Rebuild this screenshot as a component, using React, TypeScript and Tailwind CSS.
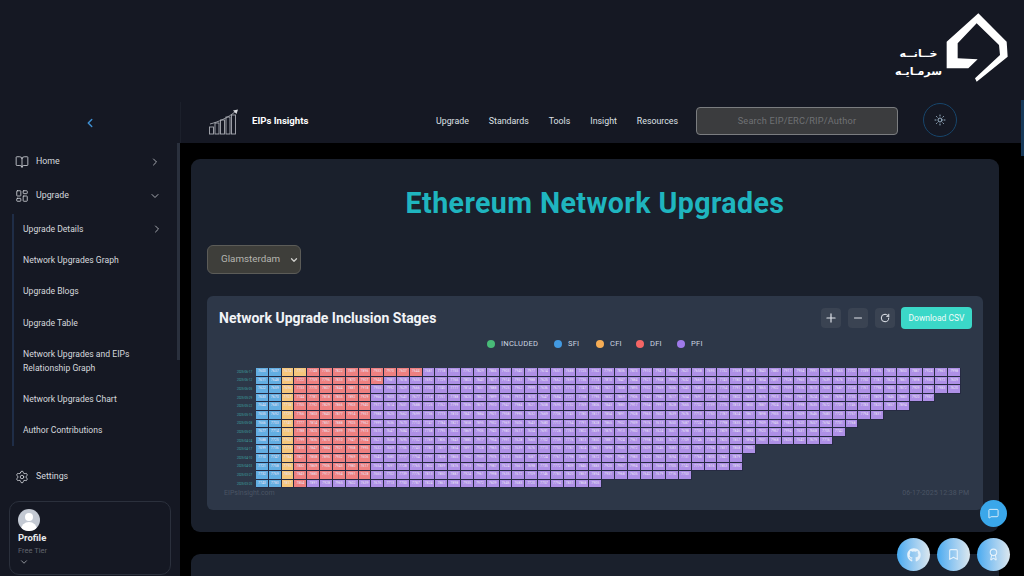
import { FaGithub } from "react-icons/fa"
import {
  Award,
  Bookmark,
  BookOpen,
  ChevronDown,
  ChevronLeft,
  ChevronRight,
  LayoutDashboard,
  MessageSquare,
  Minus,
  Plus,
  RotateCw,
  Settings,
  Sun,
} from "lucide-react"

const rowLengths = [55, 55, 55, 53, 51, 49, 47, 46, 45, 39, 38, 38, 34, 27]
const redEnds = [13, 10, 9, 9, 9, 9, 9, 9, 9, 9, 9, 9, 9, 4]
const rowLabels = [
  "2025-06-17", "2025-06-12", "2025-06-05", "2025-05-29", "2025-05-22", "2025-05-15", "2025-05-08",
  "2025-05-01", "2025-04-24", "2025-04-17", "2025-04-10", "2025-04-03", "2025-03-27", "2025-03-20",
]

const subItems = [
  { label: "Upgrade Details", h: "h-[30px]", arrow: true },
  { label: "Network Upgrades Graph", h: "h-[31px]" },
  { label: "Upgrade Blogs", h: "h-[32px]" },
  { label: "Upgrade Table", h: "h-[31px]" },
  { label: "Network Upgrades and EIPs\nRelationship Graph", h: "h-[45px]" },
  { label: "Network Upgrades Chart", h: "h-[31px]" },
  { label: "Author Contributions", h: "h-[32px]" },
]

const legend = [
  { label: "INCLUDED", color: "bg-[#48bb78]", w: "w-[67px]" },
  { label: "SFI", color: "bg-[#4299e1]", w: "w-[42px]" },
  { label: "CFI", color: "bg-[#f6ad55]", w: "w-[40px]" },
  { label: "DFI", color: "bg-[#f56565]", w: "w-[41px]" },
  { label: "PFI", color: "bg-[#9f7aea]", w: "w-[40px]" },
]

function cellColor(row: number, col: number) {
  if (col < 2) return "bg-[#63aee2]"
  if (col < (row === 0 ? 4 : 3)) return "bg-[#f5c67c]"
  if (col < redEnds[row]) return "bg-[#ee8080]"
  return "bg-[#ae90e6]"
}

function ChartLogo() {
  return (
    <svg width="30" height="26" viewBox="0 0 30 26" fill="none" stroke="#a9acb3" strokeWidth="0.9">
      <rect x="0.5" y="18" width="4" height="7" />
      <rect x="6" y="14" width="4" height="11" />
      <rect x="11.5" y="11" width="4" height="14" />
      <rect x="17" y="8" width="4" height="17" />
      <rect x="22.5" y="6" width="4" height="19" />
      <path d="M1 15 C9 13 19 9 27 2" />
      <path d="M24 1.5 L29 0.5 L27.5 5 Z" fill="#d8dade" stroke="none" />
    </svg>
  )
}

function Sidebar() {
  return (
    <aside className="relative w-[180px] shrink-0 bg-[#151823] text-[#d5d8de]">
      <div className="flex h-[43px] items-center justify-center pb-px">
        <ChevronLeft size={14} strokeWidth={2.5} className="text-[#3f8fd2]" />
      </div>
      <div className="flex h-[34px] items-center pl-[15px] pr-[19px] text-[8.8px]">
        <BookOpen size={14} strokeWidth={1.4} />
        <span className="ml-[7px] flex-1">Home</span>
        <ChevronRight size={12} className="text-[#a6a9b0]" />
      </div>
      <div className="flex h-[34px] items-center pl-[15px] pr-[19px] text-[8.8px]">
        <LayoutDashboard size={14} strokeWidth={1.4} />
        <span className="ml-[7px] flex-1">Upgrade</span>
        <ChevronDown size={12} className="text-[#a6a9b0]" />
      </div>
      <div className="ml-[12px] mt-[1px] border-l-2 border-[#1f2d47] pl-[9px] pr-[17px] text-[8.6px]">
        {subItems.map((item) => (
          <div key={item.label} className={`flex items-center justify-between leading-[14px] ${item.h}`}>
            <span className="whitespace-pre">{item.label}</span>
            {item.arrow && <ChevronRight size={12} className="text-[#a6a9b0]" />}
          </div>
        ))}
      </div>
      <div className="mt-[14px] flex h-[34px] items-center pl-[15px] text-[8.8px]">
        <Settings size={14} strokeWidth={1.4} />
        <span className="ml-[7px]">Settings</span>
      </div>
      <div className="mx-[9px] mt-[7px] h-[74px] rounded-[10px] border border-[#2b303c] pl-[8px] pt-[7px]">
        <div className="flex h-[22px] w-[22px] flex-col items-center overflow-hidden rounded-full bg-[#c3c9d3]">
          <div className="mt-[4px] h-[8px] w-[8px] rounded-full bg-white" />
          <div className="mt-[1px] h-[9px] w-[16px] rounded-t-full bg-white" />
        </div>
        <div className="text-[9.5px] font-bold text-[#e8eaed]">Profile</div>
        <div className="text-[7.5px] text-[#62666f]">Free Tier</div>
        <ChevronDown size={10} className="ml-[1px] text-[#a6a9b0]" />
      </div>
      <div className="absolute right-0 top-[41px] h-[217px] w-[3px] bg-[#2a303d]" />
    </aside>
  )
}

function TopBar() {
  return (
    <header className="flex h-[41px] shrink-0 items-center border-l border-[#1c202b] bg-[#151823] pb-[2px] text-[#dfe1e5]">
      <div className="flex w-[255px] items-center pl-[28px]">
        <ChartLogo />
        <span className="ml-[13px] text-[9.6px] font-bold text-white">EIPs Insights</span>
      </div>
      <nav className="flex gap-[20px] text-[8.8px]">
        <span>Upgrade</span>
        <span>Standards</span>
        <span>Tools</span>
        <span>Insight</span>
        <span>Resources</span>
      </nav>
      <div className="absolute left-[696px] top-[107px] flex h-[28px] w-[202px] items-center justify-center rounded-[4px] border border-[#7b7d80] bg-[#3b3c3e] text-[9.2px] tracking-[0.2px] text-[#6f7174]">
        Search EIP/ERC/RIP/Author
      </div>
      <div className="absolute left-[923px] top-[103px] flex h-[34px] w-[34px] items-center justify-center rounded-full border border-[#17456b]">
        <Sun size={12} strokeWidth={1.6} className="text-[#b9d4ea]" />
      </div>
    </header>
  )
}

function UpgradeChart() {
  return (
    <div className="mt-[22px] flex h-[214px] flex-col rounded-[6px] bg-[#2d3748] pl-[12px] pr-[11px]">
      <div className="flex h-[44px] shrink-0 items-center">
        <h2 className="flex-1 text-[14px] font-bold text-[#f2f4f7]">Network Upgrade Inclusion Stages</h2>
        <div className="flex items-center gap-[7px]">
          <button className="flex h-[20px] w-[20px] items-center justify-center rounded-[4px] bg-[#3a4352] text-[#e2e6ec]">
            <Plus size={14} />
          </button>
          <button className="flex h-[20px] w-[20px] items-center justify-center rounded-[4px] bg-[#3a4352] text-[#e2e6ec]">
            <Minus size={12} />
          </button>
          <button className="flex h-[20px] w-[20px] items-center justify-center rounded-[4px] bg-[#3a4352] text-[#e2e6ec]">
            <RotateCw size={10} strokeWidth={2.4} />
          </button>
          <button className="ml-[-1px] h-[22px] w-[71px] rounded-[4px] bg-[#3bd8c8] text-[8.5px] text-[#eefcfa]">
            Download CSV
          </button>
        </div>
      </div>
      <div className="ml-[268px] mt-[-1px] flex h-[10px] shrink-0 items-center">
        {legend.map((item) => (
          <div key={item.label} className={`flex items-center ${item.w}`}>
            <span className={`h-[8px] w-[8px] rounded-full ${item.color}`} />
            <span className="ml-[6px] text-[7.6px] tracking-[0.2px] text-[#cbd5e0]">{item.label}</span>
          </div>
        ))}
      </div>
      <div className="mt-[19px] shrink-0">
        {rowLengths.map((length, row) => (
          <div key={row} className="flex h-[8.6px] items-center">
            <span className="w-[37px] shrink-0 pl-[18px] text-[3px] leading-none text-[#3fa9a6]">{rowLabels[row]}</span>
            <div className="grid h-full w-[705px] grid-cols-[repeat(55,minmax(0,1fr))]">
              {Array.from({ length }, (_, col) => (
                <div
                  key={col}
                  className={`flex items-center justify-center overflow-hidden border-b border-r border-[#262a42] text-[3.5px] leading-none text-[#e9e4f5] ${cellColor(row, col)}`}
                >
                  {7600 + ((col * 37 + row * 11) % 400)}
                </div>
              ))}
            </div>
          </div>
        ))}
      </div>
      <div className="flex justify-between pl-[5px] pr-[3px] text-[7px] text-[#4a5464]">
        <span>EIPsInsight.com</span>
        <span>06-17-2025 12:38 PM</span>
      </div>
    </div>
  )
}

function FloatingButton({ children }: { children: React.ReactNode }) {
  return (
    <div className="flex h-[33px] w-[33px] items-center justify-center rounded-full bg-gradient-to-r from-[#45aaf0] to-[#dbe7ee] text-[#e6f2fb]">
      {children}
    </div>
  )
}

export default function App() {
  return (
    <div className="relative flex h-[576px] w-[1024px] flex-col overflow-hidden bg-[#151823] font-['Roboto',sans-serif]">
      <div className="flex h-[102px] shrink-0 justify-end pr-[12px] pt-[12px]">
        <div className="mt-[33px] text-center font-['DejaVu_Sans',sans-serif] text-[11px] font-bold leading-[18px] text-white" dir="rtl">
          <div>خــانــه</div>
          <div>سرمـایـه</div>
        </div>
        <svg width="70" height="72" viewBox="200 36 192 216">
          <path d="M300 40 L385 125 L388 170 L295 245 L290 235 L365 165 L362 135 L295 70 L238 130 L238 175 L298 178 L270 205 L205 205 L205 125 Z" fill="#fff" />
        </svg>
      </div>
      <div className="flex min-h-0 flex-1">
        <Sidebar />
        <div className="flex min-w-0 flex-1 flex-col bg-black">
          <TopBar />
          <main className="pl-[11px] pr-[25px] pt-[16px]">
            <section className="h-[373px] rounded-[9px] bg-[#1a202c] px-[16px]">
              <h1 className="pt-[24px] text-center text-[28.6px] font-bold leading-[40px] tracking-[0.4px] text-[#1fb5bf]">
                Ethereum Network Upgrades
              </h1>
              <div className="mt-[22px] flex h-[29px] w-[94px] items-center justify-between rounded-[6px] border border-[#5c5c58] bg-[#3e3e3a] pl-[13px] pr-[1px] text-[9.8px] text-[#b5b5b0]">
                Glamsterdam
                <ChevronDown size={10} strokeWidth={3} className="text-[#d0d0cc]" />
              </div>
              <UpgradeChart />
            </section>
            <section className="mt-[22px] h-[60px] rounded-[9px] bg-[#1a202c]" />
          </main>
        </div>
      </div>
      <div className="absolute right-0 top-[100px] h-[56px] w-[3px] bg-[#17395a]" />
      <div className="absolute left-[980px] top-[500px] flex h-[27px] w-[27px] items-center justify-center rounded-full bg-[#3aa7ea] text-[#e6f2fb]">
        <MessageSquare size={11} />
      </div>
      <div className="absolute left-[897px] top-[538px] flex gap-[7px]">
        <FloatingButton>
          <FaGithub size={14} />
        </FloatingButton>
        <FloatingButton>
          <Bookmark size={13} />
        </FloatingButton>
        <FloatingButton>
          <Award size={13} />
        </FloatingButton>
      </div>
    </div>
  )
}
